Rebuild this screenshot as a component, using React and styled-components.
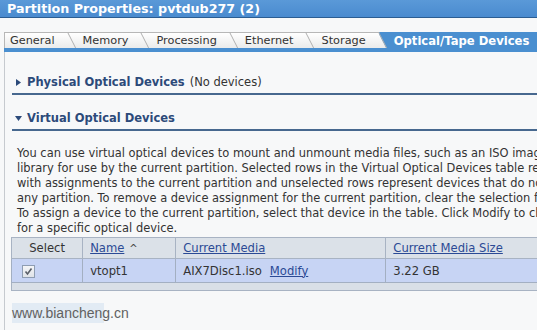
import React from "react";
import styled, { createGlobalStyle } from "styled-components";

const Global = createGlobalStyle`
  html, body { margin: 0; padding: 0; background: #f7f8f9; overflow: hidden; }
  body { font-family: "DejaVu Sans", Verdana, sans-serif; }
`;

const Frame = styled.div`
  width: 537px;
  height: 330px;
  overflow: hidden;
  background: #f7f8f9;
`;

const TitleBar = styled.div`
  height: 17px;
  border-bottom: 1px solid #2b5d92;
  background: linear-gradient(#5a99d8, #4a8bcf);
  color: #fff;
  font-weight: bold;
  font-size: 12.7px;
  line-height: 17px;
  padding-left: 7px;
  white-space: nowrap;
`;

const Body = styled.div`
  padding: 14px 0 0 4px;
  width: 720px;
`;

const TabStrip = styled.div`
  display: flex;
  border-bottom: 4px solid #4a8fd0;
`;

const Tab = styled.div`
  position: relative;
  z-index: ${(p) => p.$z};
  height: 15px;
  padding: 0 13px 0 ${(p) => (p.$first ? 5 : 15)}px;
  border-top: 1px solid ${(p) => (p.$active ? "#4a8fd0" : "#b7b7b7")};
  border-left: ${(p) => (p.$first ? "1px solid #b7b7b7" : "none")};
  background: ${(p) => (p.$active ? "#4a8fd0" : "linear-gradient(#ffffff, #ebebeb)")};
  color: ${(p) => (p.$active ? "#ffffff" : "#333333")};
  font-weight: ${(p) => (p.$active ? "bold" : "normal")};
  font-size: ${(p) => (p.$active ? 11.6 : 11.3)}px;
  line-height: 16px;
  white-space: nowrap;
  flex: ${(p) => (p.$active ? "1" : "none")};

  &::after {
    content: "";
    position: absolute;
    top: -1px;
    bottom: 0;
    right: 0;
    width: 12px;
    transform-origin: top right;
    transform: skewX(27deg);
    background: inherit;
    border-top: 1px solid #b7b7b7;
    border-right: 1px solid #b0b0b0;
    display: ${(p) => (p.$active ? "none" : "block")};
  }
`;

const Panel = styled.div`
  border-left: 1px solid #c6cacf;
  padding: 7px 0 0 0;
  height: 290px;
`;

const SectionHeader = styled.div`
  display: flex;
  align-items: center;
  margin-left: 7px;
  padding: 15px 0 3px 3px;
  height: 16px;
  border-bottom: 2px solid #47688f;
  color: #2c4a7a;
  font-size: 11.5px;
  white-space: nowrap;
`;

const Toggle = styled.span`
  display: inline-flex;
  width: 12px;
  padding-left: ${(p) => (p.$open ? 0 : 1)}px;
  box-sizing: border-box;
`;

const HeaderTitle = styled.span`
  font-weight: bold;
`;

const HeaderNote = styled.span`
  color: #333;
  margin-left: 5px;
`;

const Paragraph = styled.div`
  margin: 15px 0 0 12px;
  font-size: 11.45px;
  line-height: 15px;
  color: #333;
  white-space: nowrap;
`;

const Table = styled.table`
  margin: 1px 0 0 6px;
  border-collapse: collapse;
  width: 640px;
  font-size: 11.6px;
  color: #333;
`;

const Th = styled.th`
  height: 20px;
  padding: 0 0 0 ${(p) => (p.$center ? 0 : 7)}px;
  text-align: ${(p) => (p.$center ? "center" : "left")};
  font-weight: normal;
  background: #dbe1e8;
  border: 1px solid #a8b3c3;
  width: ${(p) => p.$w}px;
`;

const Td = styled.td`
  height: 23px;
  padding: 0 0 0 ${(p) => p.$pad ?? 7}px;
  text-align: left;
  background: #c7d4f4;
  border: 1px solid #a3afc2;
`;

const FooterCell = styled.td`
  height: 7px;
  padding: 0;
  background: #d9dfe7;
  border: 1px solid #a8b3c3;
`;

const Link = styled.a`
  color: #2b4a95;
  text-decoration: underline;
  cursor: pointer;
  margin-left: ${(p) => p.$gap || 0}px;
`;

const Caret = styled.span`
  margin-left: 5px;
  color: #444;
  font-size: 10px;
`;

const Check = styled.span`
  display: inline-flex;
  align-items: center;
  justify-content: center;
  width: 11px;
  height: 11px;
  border: 1px solid #8e9db2;
  background: linear-gradient(#f4f5f7, #dfe3e8);
  vertical-align: middle;
`;

const Watermark = styled.div`
  margin: 12px 0 0 7px;
  width: 130px;
  height: 20px;
  line-height: 20px;
  font-family: "Liberation Sans", Arial, sans-serif;
  font-size: 14px;
  color: #616161;
  background: linear-gradient(to right, #e2ebf4 92px, transparent 92px);
  white-space: nowrap;
`;

const tabs = ["General", "Memory", "Processing", "Ethernet", "Storage", "Optical/Tape Devices"];

const lines = [
  "You can use virtual optical devices to mount and unmount media files, such as an ISO image file, from the",
  "library for use by the current partition. Selected rows in the Virtual Optical Devices table represent devices",
  "with assignments to the current partition and unselected rows represent devices that do not have assignments to",
  "any partition. To remove a device assignment for the current partition, clear the selection for that device.",
  "To assign a device to the current partition, select that device in the table. Click Modify to change the media",
  "for a specific optical device.",
];

export default function App() {
  return (
    <Frame>
      <Global />
      <TitleBar>Partition Properties: pvtdub277 (2)</TitleBar>
      <Body>
        <TabStrip>
          {tabs.map((t, i) => (
            <Tab key={t} $first={i === 0} $active={i === tabs.length - 1} $z={20 - i}>
              {t}
            </Tab>
          ))}
        </TabStrip>
        <Panel>
          <SectionHeader>
            <Toggle>
              <svg width="5" height="7" viewBox="0 0 5 7">
                <path d="M0 0 L5 3.5 L0 7 Z" fill="#2c4a7a" />
              </svg>
            </Toggle>
            <HeaderTitle>Physical Optical Devices</HeaderTitle>
            <HeaderNote>(No devices)</HeaderNote>
          </SectionHeader>
          <SectionHeader>
            <Toggle $open>
              <svg width="7" height="5" viewBox="0 0 7 5">
                <path d="M0 0 L7 0 L3.5 5 Z" fill="#2c4a7a" />
              </svg>
            </Toggle>
            <HeaderTitle>Virtual Optical Devices</HeaderTitle>
          </SectionHeader>
          <Paragraph>
            {lines.map((l, i) => (
              <div key={i}>{l}</div>
            ))}
          </Paragraph>
          <Table>
            <thead>
              <tr>
                <Th $center $w={71}>Select</Th>
                <Th $w={86}>
                  <Link>Name</Link>
                  <Caret>^</Caret>
                </Th>
                <Th $w={204}>
                  <Link>Current Media</Link>
                </Th>
                <Th $w={262}>
                  <Link>Current Media Size</Link>
                </Th>
              </tr>
            </thead>
            <tbody>
              <tr>
                <Td $pad={10}>
                  <Check>
                    <svg width="9" height="9" viewBox="0 0 9 9">
                      <path d="M1.5 4.5 L3.5 7 L7.5 1.5" stroke="#5a5f68" strokeWidth="1.6" fill="none" />
                    </svg>
                  </Check>
                </Td>
                <Td>vtopt1</Td>
                <Td>
                  AIX7Disc1.iso<Link $gap={8}>Modify</Link>
                </Td>
                <Td>3.22 GB</Td>
              </tr>
              <tr>
                <FooterCell colSpan={4} />
              </tr>
            </tbody>
          </Table>
          <Watermark>www.biancheng.cn</Watermark>
        </Panel>
      </Body>
    </Frame>
  );
}
